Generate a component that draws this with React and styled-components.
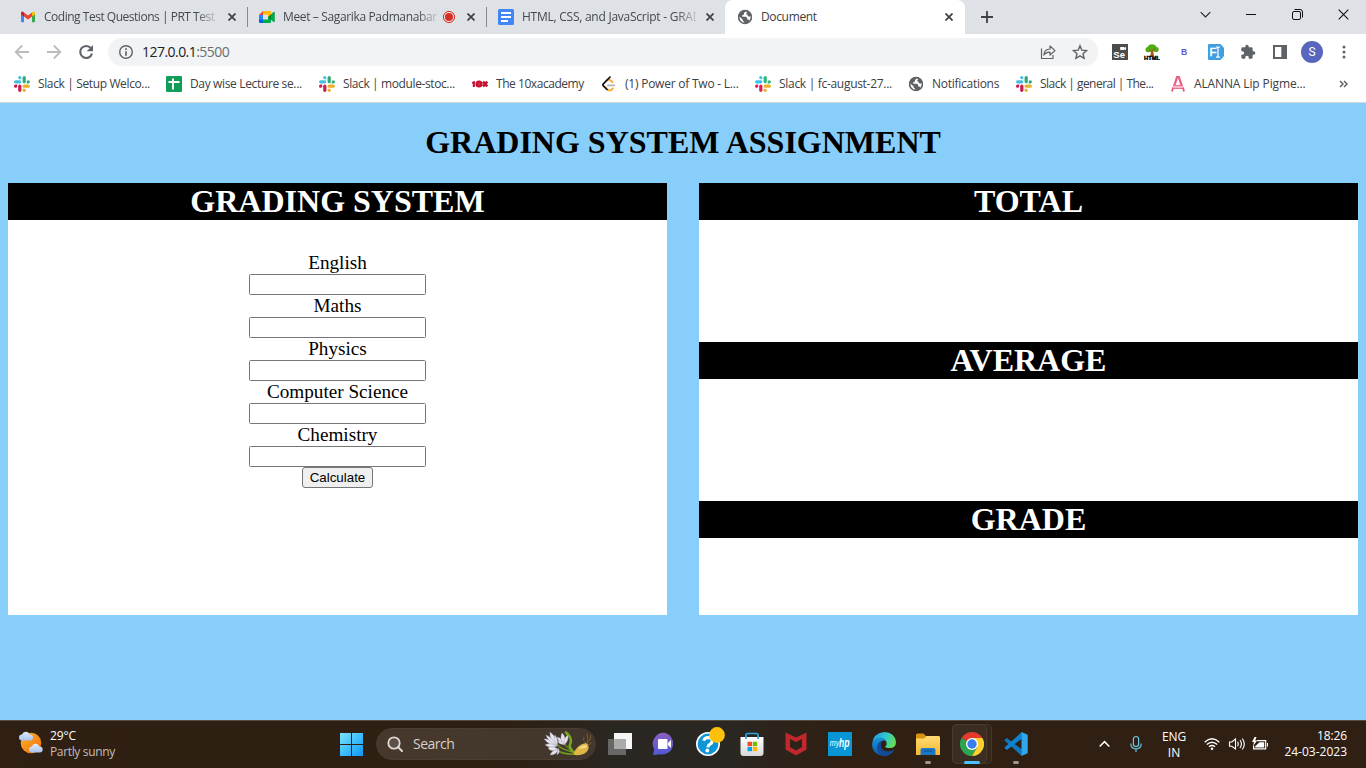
import React from "react";
import styled, { createGlobalStyle, css } from "styled-components";

const ui = `"Open Sans", "Noto Sans", sans-serif`;

const GlobalStyle = createGlobalStyle`
  * { box-sizing: border-box; }
  html, body { margin: 0; padding: 0; }
  body { overflow: hidden; background: #87cefa; }
  svg { display: block; flex: none; }
`;

const Screen = styled.div`
  width: 1366px;
  height: 768px;
  display: flex;
  flex-direction: column;
  overflow: hidden;
`;

/* ---------- browser chrome ---------- */
const TabStrip = styled.div`
  height: 34px;
  flex: none;
  display: flex;
  background: #dee1e6;
  padding-left: 8px;
  font: 12px/16px ${ui};
  color: #45494d;
`;

const Tab = styled.div`
  width: ${(p) => p.$width}px;
  flex: none;
  height: 34px;
  display: flex;
  align-items: center;
  padding: 0 ${(p) => p.$end ?? 7}px 0 ${(p) => p.$pad ?? 12}px;
  ${(p) =>
    p.$active &&
    css`
      background: #fff;
      border-radius: 8px 8px 0 0;
      color: #3c4043;
    `}
`;

const TabTitle = styled.span`
  flex: 1;
  min-width: 0;
  margin-left: 8px;
  white-space: nowrap;
  overflow: hidden;
  letter-spacing: ${(p) => p.$track ?? 0}px;
  ${(p) =>
    p.$fade &&
    css`
      mask-image: linear-gradient(to right, #000 calc(100% - 20px), transparent calc(100% + 4px));
    `}
`;

const TabClose = styled.span`
  width: 16px;
  height: 16px;
  display: grid;
  place-items: center;
  margin-left: ${(p) => p.$gap ?? 8}px;
`;

const Separator = styled.i`
  width: 1px;
  height: 20px;
  margin-top: 7px;
  background: #85888c;
  flex: none;
`;

const NewTab = styled.div`
  width: 44px;
  display: grid;
  place-items: center;
`;

const WindowControls = styled.div`
  margin-left: auto;
  display: flex;
  height: 29px;
`;

const WindowButton = styled.div`
  width: 46px;
  display: grid;
  place-items: center;
`;

const Toolbar = styled.div`
  height: 36px;
  flex: none;
  display: flex;
  align-items: center;
  background: #fff;
  padding: 0 6px;
`;

const ToolButton = styled.div`
  width: 32px;
  height: 32px;
  display: grid;
  place-items: center;
`;

const AddressBar = styled.div`
  width: 990px;
  height: 28px;
  margin: 0 6px;
  border-radius: 14px;
  background: #f1f3f4;
  display: flex;
  align-items: center;
  padding: 0 10px;
  font: 14px/20px ${ui};
  color: #202124;
  letter-spacing: -0.54px;
`;

const Address = styled.span`
  flex: 1;
  margin-left: 8px;
  span { color: #6a6e73; }
`;

const AddressActions = styled.div`
  display: flex;
  gap: 16px;
`;

const Avatar = styled.div`
  width: 22px;
  height: 22px;
  border-radius: 50%;
  background: #5866bd;
  color: #fff;
  font: 12px/22px Roboto, sans-serif;
  text-align: center;
`;

const BookmarkBar = styled.div`
  height: 33px;
  flex: none;
  display: flex;
  align-items: center;
  background: #fff;
  border-bottom: 1px solid #d6d8da;
  padding: 0 18px 4px 14px;
  font: 12px/16px ${ui};
  color: #3c4043;
`;

const Bookmark = styled.div`
  width: ${(p) => p.$width}px;
  flex: none;
  display: flex;
  align-items: center;
  gap: 8px;
  white-space: nowrap;
  letter-spacing: ${(p) => p.$track ?? 0}px;
`;

const More = styled.span`
  margin-left: auto;
`;

/* ---------- page ---------- */
const Page = styled.main`
  flex: 1;
  background: #87cefa;
  padding: 0 8px;
  font-family: "Liberation Serif", "Times New Roman", serif;
  color: #000;
`;

const PageTitle = styled.h1`
  margin: 0;
  padding-top: 21px;
  height: 80px;
  font-size: 32px;
  line-height: 37px;
  text-align: center;
`;

const Columns = styled.div`
  display: grid;
  grid-template-columns: 1fr 1fr;
  gap: 32px;
`;

const Panel = styled.section`
  height: 432px;
  background: #fff;
`;

const PanelTitle = styled.h2`
  margin: 0;
  height: 37px;
  background: #000;
  color: #fff;
  font-size: 32px;
  line-height: 37px;
  text-align: center;
`;

const Result = styled.div`
  height: 159px;
`;

const Form = styled.form`
  display: flex;
  flex-direction: column;
  align-items: center;
  padding-top: 32px;
`;

const Field = styled.label`
  display: flex;
  flex-direction: column;
  align-items: center;
  font-size: 19.2px;
  line-height: 22px;
`;

const Input = styled.input`
  width: 177px;
  height: 21px;
  border: 1px solid #767676;
  border-radius: 1.5px;
  background: #fff;
  padding: 1px 2px;
`;

const Calculate = styled.button`
  width: 71px;
  height: 21px;
  padding: 0;
  border: 1px solid #767676;
  border-radius: 3px;
  background: #efefef;
  color: #000;
  font: 13.333px/17px "Liberation Sans", Arial, sans-serif;
`;

/* ---------- taskbar ---------- */
const Taskbar = styled.footer`
  height: 48px;
  flex: none;
  display: flex;
  align-items: center;
  box-shadow: inset 0 1px #574c42;
  background: linear-gradient(90deg, #2f2013 0, #2d1f12 500px, #2a2722 620px, #2a2722 730px, #2f2013 830px, #302014 100%);
  color: #fff;
  font: 12px/16px ${ui};
`;

const Weather = styled.div`
  width: 329px;
  display: flex;
  align-items: center;
  padding-left: 18px;
  gap: 6px;
  svg { margin-bottom: 2px; }
`;

const Lines = styled.div`
  text-align: ${(p) => p.$align ?? "left"};
  letter-spacing: ${(p) => p.$track ?? 0}px;
  small {
    display: block;
    font-size: 12px;
    color: ${(p) => p.$second ?? "#fff"};
    letter-spacing: ${(p) => p.$track2 ?? 0}px;
  }
`;

const AppCell = styled.div`
  width: 44px;
  height: 48px;
  display: grid;
  place-items: center;
`;

const AppTile = styled.div`
  position: relative;
  width: 40px;
  height: 40px;
  display: grid;
  place-items: center;
  border-radius: 5px;
  isolation: isolate;
  ${(p) =>
    p.$active &&
    css`
      background: #362719;
      box-shadow: inset 0 0 0 1px #43362a;
      &::before {
        content: "";
        position: absolute;
        inset: 0 5px 0 0;
        z-index: -1;
        border: 1px solid #483b30;
        border-radius: 5px;
        background: #3b2d22;
      }
    `}
  &::after {
    content: "";
    position: absolute;
    display: ${(p) => (p.$running || p.$active ? "block" : "none")};
    bottom: 0;
    left: calc(50% - ${(p) => (p.$active ? 8 : 3)}px);
    width: ${(p) => (p.$active ? 16 : 6)}px;
    height: 3px;
    border-radius: 2px;
    background: ${(p) => (p.$active ? "#4cc2ff" : "#9b948e")};
  }
`;

const Search = styled.div`
  width: 220px;
  height: 32px;
  margin: 0 2px 0 3px;
  border-radius: 16px;
  border: 1px solid #4a3d31;
  background: linear-gradient(90deg, #46382b, #42372d);
  display: flex;
  align-items: center;
  padding: 0 3px 0 10px;
  color: #d5d0cb;
  font-size: 14px;
  letter-spacing: -0.5px;
  span { flex: 1; margin-left: 10px; padding-bottom: 1px; }
`;

const Tray = styled.div`
  margin-left: auto;
  display: flex;
  align-items: center;
  padding-right: 19px;
`;

const TrayCell = styled.div`
  width: ${(p) => p.$width}px;
  padding-top: ${(p) => p.$drop ?? 0}px;
  display: grid;
  place-items: center;
  justify-items: ${(p) => (p.$end ? "end" : "center")};
`;

/* ---------- icons ---------- */
const Gmail = () => (
  <svg width="16" height="16" viewBox="0 0 16 16">
    <path d="M1 4v8.2q0 1.1 1.1 1.1H4V6.5z" fill="#4285f4" />
    <path d="M15 4v8.2q0 1.1-1.1 1.1H12V6.5z" fill="#34a853" />
    <path d="M12 3.5 13 2.8q2-.8 2 1.6v1L12 7.6z" fill="#fbbc04" />
    <path d="M4 3.5 3 2.8Q1 2 1 4.4v1l3 2.2z" fill="#c5221f" />
    <path d="M4 3.5 8 6.5l4-3v4.1L8 10.6 4 7.6z" fill="#ea4335" />
  </svg>
);

const Meet = () => (
  <svg width="16" height="16" viewBox="0 0 16 16">
    <path d="M4 2v4H0z" fill="#ea4335" />
    <path d="M0 6h4v5H0z" fill="#2684fc" />
    <path d="M0 10.5h4V14H1.2Q0 14 0 12.8z" fill="#0066da" />
    <path d="M4 2h7q1 0 1 1v4.5l-3 .5V5.5H4z" fill="#ffba00" />
    <path d="M4 10.5h5V8l3-1v6q0 1-1 1H4z" fill="#00ac47" />
    <path d="m9 8 5.5-4.8q1-.6 1 .5v8.6q0 1-1 .4z" fill="#00832d" />
    <path d="m12 5.4 2.5-2.2q1-.6 1 .5v8.6q0 1-1 .4L12 10.5z" fill="#00ac47" />
  </svg>
);

const Docs = () => (
  <svg width="16" height="16" viewBox="0 0 16 16">
    <rect width="16" height="16" rx="1.5" fill="#4285f4" />
    <path d="M3 4h10M3 8h10M3 12h7" stroke="#fff" strokeWidth="1.8" />
  </svg>
);

const Globe = () => (
  <svg width="16" height="16" viewBox="0 0 16 16">
    <circle cx="8" cy="8" r="7" fill="#5f6368" />
    <path d="M8.5 2.5 7 4v1.4L5.3 6.2v1.6H9l1.2 1.3v1.5h1.3l1.2 1.1A6 6 0 0 0 13.8 7l-1.5.8-1.5-.7-.4-1.6H9.3V4l1.2-.9z" fill="#fff" />
    <path d="m2.3 7.5 3.3 3v1.1L7.2 13v.9A6 6 0 0 1 2.3 7.5z" fill="#fff" />
    <circle cx="8" cy="8" r="6.5" fill="none" stroke="#5f6368" strokeWidth="1.3" />
  </svg>
);

const Slack = ({ bright }) => (
  <svg width="16" height="16" viewBox="0 0 16 16">
    <g fill={bright ? "#36c5f0" : "#45bfe0"}>
      <rect x="0" y="4.200" width="7.300" height="3.200" rx="1.600" />
      <path d="M5.700 0a1.600 1.600 0 0 1 1.600 1.600v1.600H5.700a1.600 1.600 0 0 1 0-3.200z" />
    </g>
    <g fill={bright ? "#2eb67d" : "#2dab78"}>
      <rect x="8.600" y="0" width="3.200" height="7.300" rx="1.600" />
      <path d="M12.700 7.400V5.800a1.600 1.600 0 1 1 1.600 1.600z" />
    </g>
    <g fill="#ecb02b">
      <rect x="8.600" y="8.600" width="7.300" height="3.200" rx="1.600" />
      <path d="M8.600 12.700h1.600a1.600 1.600 0 1 1-1.600 1.600z" />
    </g>
    <g fill={bright ? "#e01e5a" : "#c81d4d"}>
      <rect x="4.200" y="8.600" width="3.200" height="7.300" rx="1.600" />
      <path d="M3.200 8.600v1.600a1.600 1.600 0 1 1-1.600-1.600z" />
    </g>
  </svg>
);

const Sheets = () => (
  <svg width="16" height="16" viewBox="0 0 16 16">
    <rect width="16" height="16" rx="1.3" fill="#109d58" />
    <path d="M2.5 6h11M7 2.5v11" stroke="#fff" strokeWidth="2" />
  </svg>
);

const TenX = () => (
  <svg width="16" height="16" viewBox="0 0 16 16">
    <path d="M0 6 2.900 4.800V11H.800V7.500H0z" fill="#c41230" />
    <circle cx="7" cy="8" r="3.600" fill="#c41230" />
    <path d="M7 6.500v3" stroke="#e46b7e" strokeWidth=".6" />
    <path d="m11 5.600 4.200 4.800M15.200 5.600 11 10.400" stroke="#c41230" strokeWidth="2.600" />
  </svg>
);

const LeetCode = () => (
  <svg width="16" height="16" viewBox="0 0 16 16" fill="none" strokeLinecap="round" strokeWidth="1.7">
    <path d="M5.2 4.8q2.700-2 4.600-.2L11.400 6M4 10.800l2.700 3q1.900 1.400 3.700 0l1.400-1.500" stroke="#ffa116" />
    <path d="M9 1 2.400 7.800q-1 1 0 2L6 13.500" stroke="#111" />
    <path d="M6.800 9.300h6.500" stroke="#b3b3b3" />
  </svg>
);

const Alanna = () => (
  <svg width="16" height="16" viewBox="0 0 16 16" fill="none">
    <path d="M4.300 9.500 7.200 1h1.600l2.900 8.500" stroke="#ec5f84" strokeWidth="2.300" />
    <path d="M3 9.700h10M2.600 12.300h10.800" stroke="#ee7191" strokeWidth="1.400" />
    <path d="m3 11.500-1 4M13 11.500l1 4" stroke="#e8527a" strokeWidth="1.700" />
  </svg>
);

const Cross = ({ size = 8, width = 1.7, color = "#3c4043" }) => (
  <svg width={size} height={size} viewBox="0 0 8 8">
    <path d="m.5.5 7 7m0-7-7 7" stroke={color} strokeWidth={width} />
  </svg>
);

const Recording = () => (
  <svg width="14" height="14" viewBox="0 0 14 14">
    <circle cx="7" cy="7" r="5.6" fill="none" stroke="#d93025" />
    <circle cx="7" cy="7" r="4" fill="#d93025" />
  </svg>
);

const Arrow = ({ flip }) => (
  <svg width="16" height="16" viewBox="0 0 16 16" transform={flip ? "rotate(180)" : undefined}>
    <path d="M15 8H2M8.2 1.5 1.7 8l6.5 6.5" fill="none" stroke="#babcbe" strokeWidth="1.8" />
  </svg>
);

const Reload = () => (
  <svg width="16" height="16" viewBox="0 0 16 16">
    <path d="M12.9 4.2A6 6 0 1 0 14 9.5" fill="none" stroke="#5f6368" strokeWidth="2.1" />
    <path d="M15 1v6.3H8.7z" fill="#5f6368" />
  </svg>
);

const Info = () => (
  <svg width="16" height="16" viewBox="0 0 16 16">
    <circle cx="8" cy="8" r="6.3" fill="none" stroke="#5f6368" strokeWidth="1.4" />
    <path d="M8 4.2v1.7M8 7.2v4.6" stroke="#5f6368" strokeWidth="1.7" />
  </svg>
);

const Share = () => (
  <svg width="16" height="16" viewBox="0 0 16 16" fill="none" stroke="#5f6368" strokeWidth="1.2">
    <path d="M1.5 4.5v10H13V11" />
    <path d="M3.8 11Q4.2 5.2 10 5V2l5 4.6-5 4.4V8.2Q6 8 3.8 11z" strokeLinejoin="round" />
  </svg>
);

const Star = () => (
  <svg width="16" height="16" viewBox="0 0 16 16">
    <path d="m8 1.7 1.8 4.4 4.8.4L11 9.7l1.1 4.7L8 11.9l-4.1 2.5L5 9.7 1.4 6.5l4.8-.4z" fill="none" stroke="#5f6368" strokeWidth="1.4" />
  </svg>
);

const Selenium = () => (
  <svg width="16" height="16" viewBox="0 0 16 16">
    <path fill="#4c4c4c" d="M0 0h16v16H0z" />
    <path fill="#fff" d="M8.200 3h4v.800l1.800-.8v3l-1.800-.8V6h-4z" />
    <text x="1.300" y="14" fontFamily="Liberation Sans" fontWeight="700" fontSize="9.500" fill="#fff">Se</text>
  </svg>
);

const HtmlTree = () => (
  <svg width="16" height="16" viewBox="0 0 16 16">
    <path d="m6.300 12 .9-6h1.800l1 6z" fill="#a3591a" />
    <path d="M1.500 6.500Q1 3.600 3.600 3 4.600.2 8 .2t4.400 2.800Q15.200 3.400 14.600 6.500q-.8 2.200-3.400 1.500L8.200 6.800 5 8.200Q2 8.800 1.500 6.500z" fill="#4fae14" />
    <path d="m8 8.500-2.400-3M8 7.500l3-2.600" stroke="#a3591a" strokeWidth="1.200" />
    <text x="0" y="16" textLength="16" lengthAdjust="spacingAndGlyphs" fontFamily="Liberation Sans" fontWeight="700" fontSize="5.600" fill="#000" stroke="#000" strokeWidth=".4">HTML</text>
  </svg>
);

const LetterB = () => (
  <svg width="16" height="16" viewBox="0 0 16 16">
    <text x="5" y="11.200" fontFamily="Liberation Sans" fontWeight="700" fontSize="8.600" fill="#6457d3">B</text>
  </svg>
);

const FontTool = () => (
  <svg width="16" height="16" viewBox="0 0 16 16">
    <path d="M1 0h11.5L16 4v8l-3.5 4H1q-1 0-1-1V1q0-1 1-1z" fill="#3f9fe0" />
    <text x="1.500" y="12.200" fontFamily="Liberation Sans" fontSize="11.500" fill="#fff" stroke="#fff" strokeWidth=".5">F</text>
    <path d="M8 3h1.200l.8.800.8-.8H12M10 3.500v9.200M8 13.200h1.200l.8-.7.8.7H12" fill="none" stroke="#fff" strokeWidth="1.200" />
  </svg>
);

const Puzzle = () => (
  <svg width="16" height="16" viewBox="0 0 24 24">
    <path fill="#5f6368" d="M20.5 11H19V7a2 2 0 0 0-2-2h-4V3.500a2.500 2.500 0 0 0-5 0V5H4a2 2 0 0 0-2 2v3.800h1.500a2.700 2.700 0 0 1 0 5.400H2V20a2 2 0 0 0 2 2h3.800v-1.500a2.700 2.700 0 0 1 5.400 0V22H17a2 2 0 0 0 2-2v-4h1.500a2.500 2.500 0 0 0 0-5z" />
  </svg>
);

const SidePanel = () => (
  <svg width="16" height="16" viewBox="0 0 16 16">
    <path d="M1 1h14v14H1zM3 3v10h6.300V3z" fill="#5f6368" fillRule="evenodd" />
  </svg>
);

const Dots = () => (
  <svg width="16" height="16" viewBox="0 0 16 16" fill="#5f6368">
    <circle cx="8" cy="3" r="1.500" /><circle cx="8" cy="8" r="1.500" /><circle cx="8" cy="13" r="1.500" />
  </svg>
);

const PartlySunny = () => (
  <svg width="26" height="24" viewBox="0 0 26 24">
    <defs>
      <linearGradient id="sun" x2="1" y2="1"><stop stopColor="#fbb62b" /><stop offset="1" stopColor="#ef6c0d" /></linearGradient>
      <linearGradient id="cloud" x2="0" y2="1"><stop stopColor="#e3edfb" /><stop offset="1" stopColor="#a7c1ee" /></linearGradient>
    </defs>
    <circle cx="13" cy="12" r="10.300" fill="url(#sun)" />
    <path d="M4 9.500a3 3 0 0 1 0-6Q5 .8 7.800.8q3 0 3.700 2.700 3.500-.2 3.500 3 0 3-3 3z" fill="url(#cloud)" />
    <path d="M14 21.500a3 3 0 0 1 0-6q.8-2.800 3.500-2.800 3 0 3.600 2.800 3.600-.1 3.600 3 0 3-3 3z" fill="url(#cloud)" />
  </svg>
);

const Windows = () => (
  <svg width="24" height="24" viewBox="0 0 24 24">
    <defs><linearGradient id="win" x2="1" y2="1"><stop stopColor="#7fe0fc" /><stop offset=".5" stopColor="#3fc0fb" /><stop offset="1" stopColor="#0c95f5" /></linearGradient></defs>
    <path d="M1 1h11v11H1zM13 1h11v11H13zM1 13h11v11H1zM13 13h11v11H13z" fill="url(#win)" />
  </svg>
);

const SearchIcon = () => (
  <svg width="16" height="16" viewBox="0 0 16 16">
    <circle cx="7" cy="7" r="5.700" fill="#5c4f45" stroke="#ddd9d6" strokeWidth="1.800" />
    <path d="m11 11 4 4" stroke="#ddd9d6" strokeWidth="2" strokeLinecap="round" />
  </svg>
);

const Plant = () => (
  <svg width="48" height="26" viewBox="0 0 48 26" fill="none">
    <g stroke="#6f9a1e" strokeWidth="1.500" strokeLinecap="round">
      <path d="M33 22Q20 20 12 13" /><path d="M32 22.500Q23 17 19 11" stroke="#55821a" /><path d="M33 23Q20 24 12 19" />
      <path d="M22 1.500q7 6 4 12-1 4 3 7" strokeWidth="2.600" stroke="#78a521" />
    </g>
    <g fill="#e6e4ec" stroke="#9b98ad" strokeWidth=".4">
      <path d="M13 15Q6 15 0 8q6-1 13 7z" /><path d="M13 15Q5 8 6 1q7 5 7 14z" /><path d="M13 15Q3 9 2 4q7 3 11 11z" />
      <path d="M13 15Q7 18 1 14q5-3 12 1z" /><path d="M13 15Q9 7 11 4q4 5 2 11z" />
      <path d="M20 14q-6-3-7-8 6 1 7 8z" /><path d="M20 14q-5-6-2-12 5 4 2 12z" /><path d="M20 14q-1-7 4-10 1 6-4 10z" /><path d="M20 13q-5 1-6-3 4-1 6 3z" />
      <path d="M14 18q-6-4-10-1 3 5 10 1z" /><path d="M14 18q-6 1-8 6 7 0 8-6z" /><path d="M14 17q-1 5-1 7 4-3 1-7z" />
    </g>
    <path d="M43 14q2-5 0-11.500M43 12q4-3 4-8M42 12q-4-2-2-6M43 14q4 0 4-3" stroke="#876033" strokeWidth=".9" />
    <path d="M29.500 22Q34 13 42 12q4 3 2 7-3 6-13 5-2-.5-1.500-2z" fill="#e0b545" />
    <path d="M34 18q4-4 8-4 2 2-1 3z" fill="#f5dc87" />
  </svg>
);

const TaskView = () => (
  <svg width="24" height="24" viewBox="0 0 24 24">
    <path d="M6 1h18v16H6z" fill="#f6f6f6" />
    <path d="M0 7h18v16H0z" fill="#686765" /><path d="M6 7h12v10H6z" fill="#aaa" />
  </svg>
);

const Chat = () => (
  <svg width="24" height="24" viewBox="0 0 24 24">
    <defs><linearGradient id="chat" x2="0" y2="1"><stop stopColor="#8b5fc3" /><stop offset="1" stopColor="#5059d4" /></linearGradient></defs>
    <path d="M12.500.800a11 11 0 1 1-4.800 21.500L1 23.200l1.200-6A11 11 0 0 1 12.500.800z" fill="url(#chat)" />
    <rect x="6" y="7" width="9.500" height="10" rx="1" fill="#fff" />
    <path d="m16 11 3-3v8l-3-3z" fill="#fff" />
  </svg>
);

const Help = () => (
  <svg width="36" height="36" viewBox="0 0 36 36">
    <circle cx="18" cy="18" r="11.200" fill="#0d96d5" stroke="#fff" strokeWidth="1.600" />
    <path d="M13.800 14.800q.5-3.300 4.400-3.300 4 .1 4 3.400 0 2-2.200 3.200-2 1.200-2.200 3.200" fill="none" stroke="#fff" strokeWidth="3" />
    <circle cx="17.300" cy="24.500" r="1.900" fill="#fff" />
    <circle cx="27" cy="9" r="7.900" fill="#fec10b" />
  </svg>
);

const Store = () => (
  <svg width="24" height="24" viewBox="0 0 24 24">
    <defs><linearGradient id="bag" x2="0" y2="1"><stop stopColor="#fff" /><stop offset="1" stopColor="#d7d8da" /></linearGradient></defs>
    <path d="M.5 5h23v16q0 3-3 3h-17q-3 0-3-3z" fill="url(#bag)" />
    <path d="M6 7V3q0-1.500 1.500-1.500h9Q18 1.500 18 3v4" fill="none" stroke="#29a9e0" strokeWidth="1.700" />
    <path d="M7.500 9.800H12v4.400H7.500z" fill="#f25022" /><path d="M12.800 9.800h4.400v4.400h-4.400z" fill="#7fba00" />
    <path d="M7.500 15H12v4.200H7.500z" fill="#00a4ef" /><path d="M12.800 15h4.400v4.200h-4.400z" fill="#ffb900" />
  </svg>
);

const Shield = () => (
  <svg width="24" height="24" viewBox="0 0 24 24">
    <path d="m1.500.500 10.500 5 10.500-5v17L12 23.500l-10.500-6zM6 7v8l6 3.500 6-3.500V7l-6 3z" fill="#c0282d" fillRule="evenodd" />
  </svg>
);

const MyHp = () => (
  <svg width="24" height="24" viewBox="0 0 24 24">
    <path d="M0 0h24v24H0z" fill="#0795d6" />
    <text x="1.800" y="14" textLength="9.500" lengthAdjust="spacingAndGlyphs" fontFamily="Liberation Sans" fontStyle="italic" fontSize="8.500" fill="#fff">my</text>
    <text x="11" y="15" textLength="10.500" lengthAdjust="spacingAndGlyphs" fontFamily="Liberation Sans" fontWeight="700" fontStyle="italic" fontSize="12.500" fill="#fff">hp</text>
  </svg>
);

const Edge = () => (
  <svg width="24" height="24" viewBox="0 0 24 24">
    <defs>
      <linearGradient id="eTop" x1="0" y1=".2" x2="1" y2=".5"><stop stopColor="#1f9fe0" /><stop offset=".55" stopColor="#30c6cf" /><stop offset="1" stopColor="#65df58" /></linearGradient>
      <linearGradient id="eBase" x2="0" y2="1"><stop stopColor="#1796d8" /><stop offset="1" stopColor="#0c58a8" /></linearGradient>
    </defs>
    <path d="M0 12.500Q1 1 12 0q11 .5 12 10 0 6-6.300 6-4.700 0-4.500-1.800 2-1.500 1.300-3.800Q13 6 8 6 2.500 6.500 0 12.500z" fill="url(#eTop)" />
    <path d="M0 12.300Q1.500 5.500 8 5.500q4.500.2 6 3.300-5-1.500-5.600 3.700.2 6.500 7 7.200 3.300.1 6.700-1.700Q18.500 24 12 24 .500 23 0 12.300z" fill="url(#eBase)" />
    <path d="M9.500 23.500Q4.500 20 5.200 14.200 6.500 9.500 10.500 8.600 7.500 13 10 17q4 5 12.100 1.100Q18 24.700 9.500 23.500z" fill="#124a96" />
  </svg>
);

const Folder = () => (
  <svg width="24" height="24" viewBox="0 0 24 24">
    <defs><linearGradient id="fold" x2="0" y2="1"><stop stopColor="#ffdc76" /><stop offset="1" stopColor="#f7b62d" /></linearGradient></defs>
    <path d="M0 3q0-1.500 1.500-1.500h6L10 4h12q2 0 2 2v5H0z" fill="#d8920d" />
    <path d="M0 6.500h8L10.500 4H22.500Q24 4 24 5.500V23H0z" fill="url(#fold)" />
    <path d="M4.500 23v-5q0-2 2-2h11q2 0 2 2v5z" fill="#1b76c5" /><path d="M8 19h8" stroke="#0b4d88" />
  </svg>
);

const Chrome = () => (
  <svg width="24" height="24" viewBox="0 0 24 24">
    <path d="M12 12 1.600 6A12 12 0 0 1 22.400 6z" fill="#e33b2e" />
    <path d="M12 12 1.600 6A12 12 0 0 0 12 24l5-9z" fill="#2da44e" />
    <path d="M12 6h10.400A12 12 0 0 1 12 24l5.200-9z" fill="#fdd02f" />
    <circle cx="12" cy="12" r="6" fill="#fff" /><circle cx="12" cy="12" r="4.700" fill="#3a7df0" />
  </svg>
);

const VsCode = () => (
  <svg width="24" height="24" viewBox="0 0 24 24">
    <path d="M17.800 24 .700 8.700v-1L2.800 6 17.800 17.300z" fill="#1177bd" />
    <path d="M17.800 0 .700 15.300v1l2.100 1.700L17.800 6.700z" fill="#0f83cf" />
    <path d="m17.500 0 6.200 2.800v18.400L17.500 24z" fill="#2fa7ed" />
  </svg>
);

const Chevron = ({ up, w = 10, color = "#fff", sw = 1.4 }) => (
  <svg width={w} height={w / 2 + 2} viewBox="0 0 10 7" transform={up ? "rotate(180)" : undefined}>
    <path d="m.5 1 4.500 4.500L9.500 1" fill="none" stroke={color} strokeWidth={sw} />
  </svg>
);

const Mic = () => (
  <svg width="14" height="18" viewBox="0 0 14 18" fill="none" stroke="#6cc6df" strokeWidth="1.200">
    <rect x="4.400" y="1.500" width="5.200" height="10" rx="2.600" />
    <path d="M1.800 8.500q0 5.300 5.200 5.300t5.200-5.300M7 14v3" />
  </svg>
);

const Wifi = () => (
  <svg width="16" height="14" viewBox="0 0 16 14" fill="none" stroke="#fff" strokeWidth="1.300">
    <path d="M.600 5.300q7.400-7 14.800 0M2.800 7.600q5.200-4.800 10.400 0M5 9.800q3-2.600 6 0" />
    <circle cx="8" cy="11.700" r="1.300" fill="#fff" stroke="none" />
  </svg>
);

const Speaker = () => (
  <svg width="18" height="14" viewBox="0 0 18 14" fill="none" stroke="#fff" strokeWidth="1.100">
    <path d="M1.500 5v4.200h2.300L7.500 12V2L3.800 5zM9.500 4.800q1.500 2.200 0 4.500M12 3q2.800 4 0 8M14.300 1.500q4 5.500 0 11" />
  </svg>
);

const Battery = () => (
  <svg width="18" height="14" viewBox="0 0 18 14">
    <path d="M6 3.600h8.700v8.300H2.600V8.500" fill="none" stroke="#fff" strokeWidth="1.200" />
    <path d="M4.200 10.500V9.300L8.500 5.200h4.700v5.300zM16 6h1v3.500h-1z" fill="#fff" />
    <path d="M3.600 0 1 5h2L2 9l4.200-5.400H4.200L5.500 0z" fill="#fff" />
  </svg>
);

const bookmarks = [
  ["Slack | Setup Welco...", <Slack />, 152, -0.37],
  ["Day wise Lecture se...", <Sheets />, 153, -0.35],
  ["Slack | module-stoc...", <Slack />, 153, -0.39],
  ["The 10xacademy", <TenX />, 129, -0.45],
  ["(1) Power of Two - L...", <LeetCode />, 154, -0.23],
  ["Slack | fc-august-27...", <Slack bright />, 153, -0.3],
  ["Notifications", <Globe />, 108, -0.27],
  ["Slack | general | The...", <Slack />, 154, -0.53],
  ["ALANNA Lip Pigme...", <Alanna />, 140, -0.13],
];

const extensions = [
  <Selenium />, <HtmlTree />, <LetterB />, <FontTool />, <Puzzle />, <SidePanel />, <Avatar>S</Avatar>, <Dots />,
];

const apps = [
  { icon: <TaskView /> }, { icon: <Chat /> }, { icon: <Help /> }, { icon: <Store /> }, { icon: <Shield /> },
  { icon: <MyHp /> }, { icon: <Edge /> }, { icon: <Folder />, running: true }, { icon: <Chrome />, active: true },
  { icon: <VsCode />, running: true },
];

const subjects = ["English", "Maths", "Physics", "Computer Science", "Chemistry"];

export default function App() {
  return (
    <Screen>
      <GlobalStyle />
      <TabStrip>
        <Tab $width={239}>
          <Gmail />
          <TabTitle $fade $track={-0.48}>Coding Test Questions | PRT Test</TabTitle>
          <TabClose><Cross /></TabClose>
        </Tab>
        <Separator />
        <Tab $width={238} $pad={11}>
          <Meet />
          <TabTitle $fade $track={-0.36}>Meet – Sagarika Padmanaban</TabTitle>
          <TabClose $gap={4}><Recording /></TabClose>
          <TabClose $gap={6}><Cross /></TabClose>
        </Tab>
        <Separator />
        <Tab $width={238} $pad={11}>
          <Docs />
          <TabTitle $fade $track={-0.25}>HTML, CSS, and JavaScript - GRAD</TabTitle>
          <TabClose $gap={6}><Cross /></TabClose>
        </Tab>
        <Tab $width={240} $end={8} $active>
          <Globe />
          <TabTitle $track={-0.35}>Document</TabTitle>
          <TabClose><Cross /></TabClose>
        </Tab>
        <NewTab>
          <svg width="12" height="12" viewBox="0 0 12 12"><path d="M6 0v12M0 6h12" stroke="#3c4043" strokeWidth="1.800" /></svg>
        </NewTab>
        <WindowControls>
          <WindowButton><Chevron w={11} color="#222" sw={1} /></WindowButton>
          <WindowButton><svg width="10" height="2"><path d="M0 .500h10" stroke="#111" /></svg></WindowButton>
          <WindowButton>
            <svg width="11" height="11" viewBox="0 0 11 11" fill="none" stroke="#111">
              <rect x=".5" y="2.500" width="8" height="8" rx="1.500" /><path d="M2.500.500H8Q10.500.500 10.500 3v5.500" />
            </svg>
          </WindowButton>
          <WindowButton><Cross size={11} width={0.8} color="#111" /></WindowButton>
        </WindowControls>
      </TabStrip>

      <Toolbar>
        <ToolButton><Arrow /></ToolButton>
        <ToolButton><Arrow flip /></ToolButton>
        <ToolButton><Reload /></ToolButton>
        <AddressBar>
          <Info />
          <Address>127.0.0.1<span>:5500</span></Address>
          <AddressActions><Share /><Star /></AddressActions>
        </AddressBar>
        {extensions.map((icon, i) => <ToolButton key={i}>{icon}</ToolButton>)}
      </Toolbar>

      <BookmarkBar>
        {bookmarks.map(([label, icon, width, track], i) => (
          <Bookmark key={i} $width={width} $track={track}>{icon}{label}</Bookmark>
        ))}
        <More>
          <svg width="9" height="8" viewBox="0 0 9 8" fill="none" stroke="#5f6368" strokeWidth="1.500">
            <path d="m1 1 3 3-3 3M5 1l3 3-3 3" />
          </svg>
        </More>
      </BookmarkBar>

      <Page>
        <PageTitle>GRADING SYSTEM ASSIGNMENT</PageTitle>
        <Columns>
          <Panel>
            <PanelTitle>GRADING SYSTEM</PanelTitle>
            <Form onSubmit={(e) => e.preventDefault()}>
              {subjects.map((s) => <Field key={s}>{s}<Input /></Field>)}
              <Calculate type="button">Calculate</Calculate>
            </Form>
          </Panel>
          <Panel>
            {["TOTAL", "AVERAGE", "GRADE"].map((t) => <Result key={t}><PanelTitle>{t}</PanelTitle></Result>)}
          </Panel>
        </Columns>
      </Page>

      <Taskbar>
        <Weather>
          <PartlySunny />
          <Lines $second="#c3beba" $track={-0.1} $track2={-0.35}>29°C<small>Partly sunny</small></Lines>
        </Weather>
        <AppCell><Windows /></AppCell>
        <Search><SearchIcon /><span>Search</span><Plant /></Search>
        {apps.map((a, i) => (
          <AppCell key={i}><AppTile $running={a.running} $active={a.active}>{a.icon}</AppTile></AppCell>
        ))}
        <Tray>
          <TrayCell $width={32}><Chevron up w={11} /></TrayCell>
          <TrayCell $width={32}><Mic /></TrayCell>
          <TrayCell $width={44} $drop={2}><Lines $align="center" $track={-0.2}>ENG<small>IN</small></Lines></TrayCell>
          <TrayCell $width={32}><Wifi /></TrayCell>
          <TrayCell $width={16}><Speaker /></TrayCell>
          <TrayCell $width={32}><Battery /></TrayCell>
          <TrayCell $width={71} $end><Lines $align="right" $track={-0.1}>18:26<small>24-03-2023</small></Lines></TrayCell>
        </Tray>
      </Taskbar>
    </Screen>
  );
}
